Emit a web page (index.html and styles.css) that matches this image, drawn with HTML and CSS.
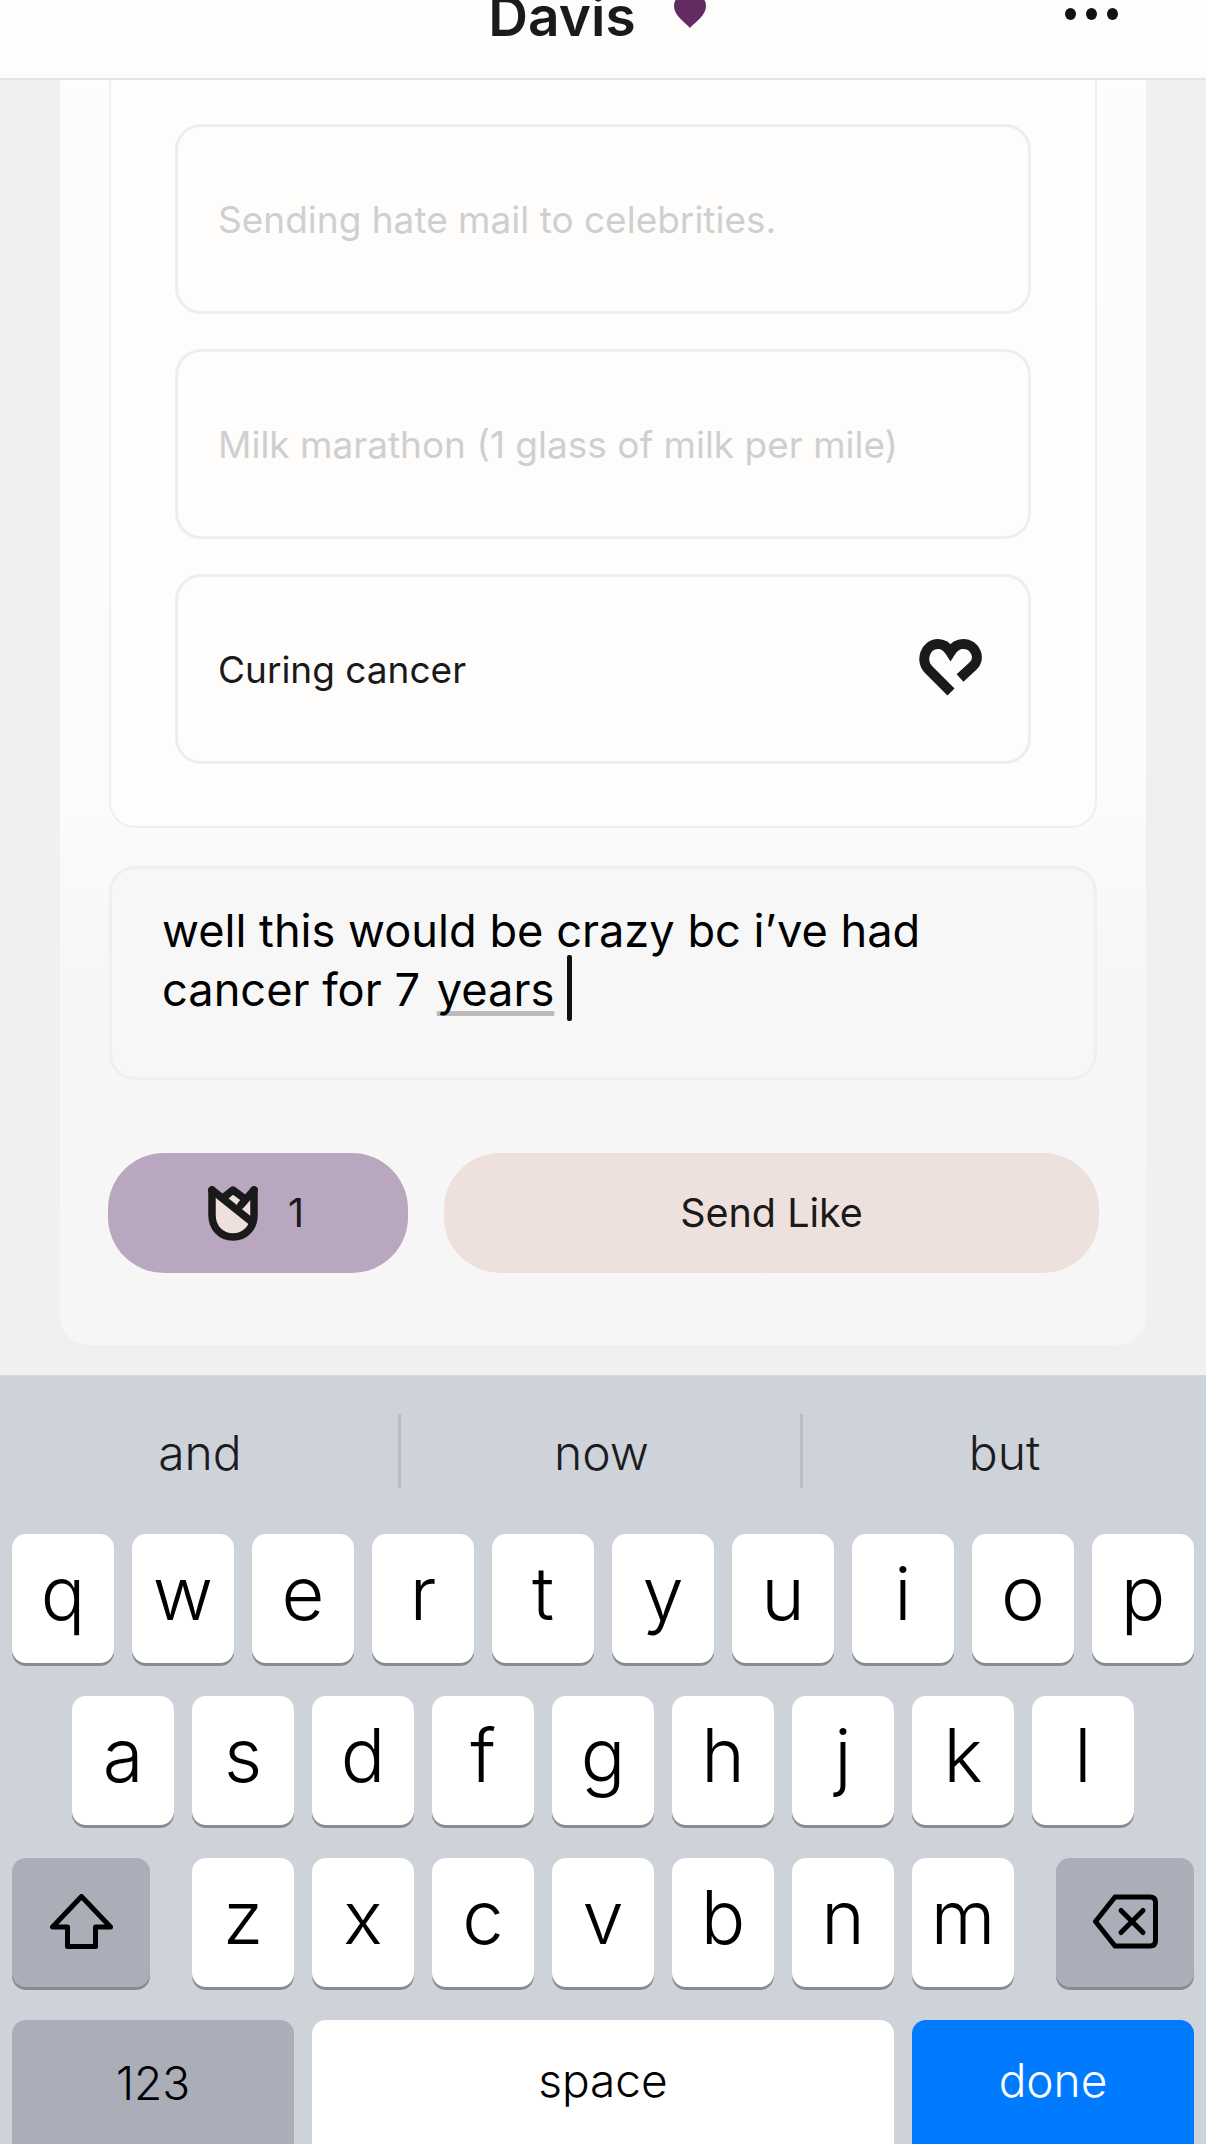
FILE: index.html
```html
<!DOCTYPE html>
<html lang="en">
<head>
  <meta charset="UTF-8">
  <meta name="viewport" content="width=device-width, initial-scale=1.0">
  <title>Send Like</title>
  <link rel="stylesheet" href="styles.css">
</head>
<body>
  <header class="topbar">
    <div class="topbar-title">
      <h1>Davis</h1>
      <svg class="topbar-heart" viewBox="0 0 32 32" aria-hidden="true">
        <path d="M16 32 C11 26 0 20 0 10 C0 4 4 0 9 0 C12 0 15 2 16 4 C17 2 20 0 23 0 C28 0 32 4 32 10 C32 20 21 26 16 32 Z"/>
      </svg>
    </div>
    <div class="topbar-more"><span></span><span></span><span></span></div>
  </header>

  <main class="content">
    <section class="sheet">
      <div class="prompt-card">
        <div class="option muted">Sending hate mail to celebrities.</div>
        <div class="option muted">Milk marathon (1 glass of milk per mile)</div>
        <div class="option">
          <span>Curing cancer</span>
          <svg class="like-icon" viewBox="0 0 63 59" aria-hidden="true">
            <path d="M32 53 L9.5 30.5 C1 22 6 5 19 5 C25 5 29 9 31.5 13 C34 9 38 5 44 5 C57 5 62 20 54 27 L41 39"/>
          </svg>
        </div>
      </div>

      <div class="comment-box">well this would be crazy bc i’ve had<br>cancer for 7 <span class="spell">years</span><span class="caret"></span></div>

      <div class="actions">
        <button class="rose-btn">
          <svg class="rose-icon" viewBox="0 0 50 56" aria-hidden="true">
            <path class="rose-fill" d="M4 5 L15 13 L25 5 L38 15 L46 5 V30 C46 43 37 52 25 52 C13 52 4 43 4 30 Z"/>
            <path d="M4 5 V30 C4 43 13 52 25 52 C37 52 46 43 46 30 V5"/>
            <path d="M4 5 L44 37"/>
            <path d="M15 13 L25 5 L37 14"/>
            <path d="M46 5 L33 20"/>
          </svg>
          <span>1</span>
        </button>
        <button class="send-btn">Send Like</button>
      </div>
    </section>
  </main>

  <div class="keyboard">
    <div class="suggestions">
      <div class="suggestion">and</div>
      <div class="suggestion">now</div>
      <div class="suggestion">but</div>
    </div>
    <div class="key-row">
      <div class="key">q</div><div class="key">w</div><div class="key">e</div><div class="key">r</div><div class="key">t</div><div class="key">y</div><div class="key">u</div><div class="key">i</div><div class="key">o</div><div class="key">p</div>
    </div>
    <div class="key-row row-home">
      <div class="key">a</div><div class="key">s</div><div class="key">d</div><div class="key">f</div><div class="key">g</div><div class="key">h</div><div class="key">j</div><div class="key">k</div><div class="key">l</div>
    </div>
    <div class="key-row">
      <div class="key key-mod key-shift">
        <svg class="key-icon" viewBox="0 0 63 55" aria-hidden="true">
          <path d="M31.5 2.5 L2.500 33 H17.500 V52.5 H45.500 V33 H60.500 Z"/>
        </svg>
      </div>
      <div class="key">z</div><div class="key">x</div><div class="key">c</div><div class="key">v</div><div class="key">b</div><div class="key">n</div><div class="key">m</div>
      <div class="key key-mod key-delete">
        <svg class="key-icon" viewBox="0 0 65 54" aria-hidden="true">
          <path d="M22 2.5 H57 Q62.5 2.5 62.5 8 V46 Q62.5 51.500 57 51.500 H22 L2.500 27 Z"/>
          <path d="M28 16 L50 38 M50 16 L28 38"/>
        </svg>
      </div>
    </div>
    <div class="key-row">
      <div class="key key-mod key-small key-123">123</div>
      <div class="key key-small key-space">space</div>
      <div class="key key-small key-done">done</div>
    </div>
  </div>
</body>
</html>
```

FILE: styles.css
```css
* {
  box-sizing: border-box;
}

html, body {
  height: 2144px;
  margin: 0;
  overflow: hidden;
}

body {
  font-family: Inter, sans-serif;
  background: #f0f0f1;
  color: #1a1a1a;
  display: flex;
  flex-direction: column;
}

.topbar {
  height: 80px;
  flex: none;
  background: #fefdfc;
  border-bottom: 2px solid #e4e4e4;
  display: flex;
  justify-content: center;
  overflow: hidden;
  padding-right: 12px;
}

.topbar-title {
  display: flex;
  align-items: flex-start;
  gap: 38px;
}

.topbar h1 {
  margin: -16px 0 0;
  font-size: 55px;
  line-height: 64px;
  font-weight: 600;
}

.topbar-heart {
  width: 32px;
  height: 32px;
  margin-top: -4px;
  fill: #642a62;
}

.topbar-more {
  position: absolute;
  top: 8px;
  left: 1065px;
  display: flex;
  gap: 10px;
}

.topbar-more span {
  width: 11px;
  height: 12px;
  border-radius: 50%;
  background: #111;
}

.content {
  height: 1295px;
  flex: none;
  padding: 0 60px;
  overflow: hidden;
}

.sheet {
  width: 1086px;
  height: 1265px;
  padding: 0 49px;
  border-radius: 0 0 28px 28px;
  background: linear-gradient(#fefdfc 0%, #fdfcfb 55%, #f8f7f7 70%, #f7f6f6 100%);
}

.prompt-card {
  height: 748px;
  padding: 44px 64px 0;
  display: flex;
  flex-direction: column;
  gap: 35px;
  border: 2px solid #efefef;
  border-top: none;
  border-radius: 0 0 26px 26px;
  background: #fefdfc;
}

.option {
  height: 190px;
  flex: none;
  padding: 0 40px;
  display: flex;
  align-items: center;
  justify-content: space-between;
  border: 3px solid #eeeeee;
  border-radius: 26px;
  background: #fefdfc;
  font-size: 37px;
}

.option.muted {
  color: #cfcfcf;
}

.like-icon {
  width: 63px;
  height: 59px;
  margin: -2px 6px 0 0;
  fill: none;
  stroke: #1a1a1a;
  stroke-width: 10;
}

.comment-box {
  height: 214px;
  margin-top: 38px;
  padding: 32px 50px 0;
  border: 3px solid #efefef;
  border-radius: 26px;
  background: #f8f7f7;
  color: #000;
  font-size: 45.2px;
  line-height: 59px;
}

.spell {
  margin-left: 4px;
  text-decoration: underline #bbbbbb 5px;
  text-underline-offset: 5px;
  text-decoration-skip-ink: none;
}

.caret {
  display: inline-block;
  width: 5px;
  height: 66px;
  margin: -20px 0 0 13px;
  vertical-align: -15px;
  border-radius: 2px;
  background: #111;
}

.actions {
  margin-top: 73px;
  display: flex;
  gap: 36px;
}

.actions button {
  height: 120px;
  border: none;
  border-radius: 56px;
  color: #1a1a1a;
  font-family: Inter, sans-serif;
  font-size: 39.500px;
}

.rose-btn {
  width: 300px;
  flex: none;
  margin-left: -1px;
  padding: 0 4px 0 0;
  display: flex;
  align-items: center;
  justify-content: center;
  gap: 30px;
  background: #b9a6bf;
}

.rose-icon {
  width: 50px;
  height: 56px;
  fill: none;
  stroke: #1a1a1a;
  stroke-width: 7.5;
  stroke-linecap: round;
  stroke-linejoin: round;
}

.rose-fill {
  fill: #eee0dc;
  stroke: none;
}

.send-btn {
  flex: 1;
  margin-right: -2px;
  background: #eee0dc;
}

.keyboard {
  flex: 1;
  background: #ced2d9;
  font-family: Inter, sans-serif;
  font-weight: 300;
  color: #000;
  border-top: 1px solid #d6d8de;
}

.suggestions {
  height: 158px;
  display: flex;
  padding-top: 38px;
}

.suggestion {
  flex: 0 0 402px;
  height: 74px;
  padding-left: 2px;
  text-align: center;
  font-size: 48px;
  line-height: 78px;
  color: #1c1c1e;
  border-right: 3px solid #babdc6;
}

.suggestion:first-child {
  flex-basis: 401px;
}

.suggestion:last-child {
  flex: 1;
  padding-left: 0;
  border-right: none;
}

.key-row {
  height: 129px;
  margin-bottom: 33px;
  padding: 0 12px;
  display: flex;
  gap: 18px;
}

.row-home {
  padding-left: 72px;
}

.key {
  width: 102px;
  height: 129px;
  flex: none;
  display: flex;
  justify-content: center;
  align-items: center;
  padding-bottom: 12px;
  border-radius: 14px;
  background: #fff;
  box-shadow: 0 3px 0 #888b93;
  font-size: 74px;
}

.key-mod {
  background: #a9aeb9;
}

.key-shift {
  width: 138px;
  margin-right: 24px;
}

.key-delete {
  width: 138px;
  margin-left: 24px;
}

.key-icon {
  fill: none;
  stroke: #000;
  stroke-width: 5;
  stroke-linejoin: round;
  stroke-linecap: round;
  width: 65px;
  height: 55px;
  margin-top: 10px;
}

.key-small {
  font-size: 46px;
  height: 160px;
  padding-bottom: 40px;
}

.key-123 {
  width: 282px;
  padding-bottom: 34px;
}

.key-space {
  width: 582px;
}

.key-done {
  width: 282px;
  background: #007aff;
  color: #fff;
}
```
